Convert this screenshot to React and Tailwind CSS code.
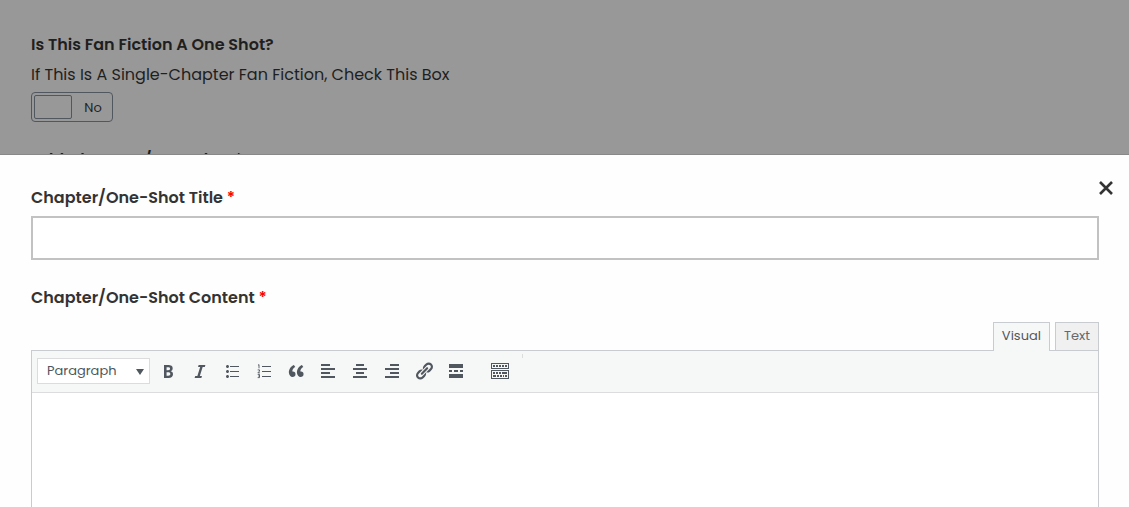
import React, { useState } from "react";

const icons = {
  bold: <path d="M6 4v13h4.54c1.37 0 2.46-.33 3.26-1 .8-.66 1.2-1.58 1.2-2.77 0-.84-.17-1.51-.51-2.01s-.9-.85-1.67-1.03v-.09c.57-.1 1.02-.4 1.36-.9s.51-1.13.51-1.91c0-1.14-.39-1.98-1.17-2.5C12.75 4.26 11.5 4 9.78 4H6zm2.57 5.15V6.26h1.36c.73 0 1.27.11 1.61.32.34.22.51.58.51 1.07 0 .54-.16.92-.47 1.15s-.82.35-1.51.35h-1.5zm0 2.19h1.6c1.44 0 2.16.53 2.16 1.61 0 .6-.17 1.05-.51 1.34s-.86.43-1.57.43H8.57v-3.38z" />,
  italic: <path d="M14.78 6h-2.13l-2.8 9h2.12l-.62 2H4.6l.62-2h2.14l2.8-9H8.03l.62-2h6.75z" />,
  bullist: <path d="M5.5 7C4.67 7 4 6.33 4 5.5 4 4.68 4.67 4 5.5 4 6.32 4 7 4.68 7 5.5 7 6.33 6.32 7 5.5 7zM8 5h9v1H8V5zm-2.5 7c-.83 0-1.5-.67-1.5-1.5C4 9.68 4.67 9 5.5 9c.82 0 1.5.68 1.5 1.5 0 .83-.68 1.5-1.5 1.5zM8 10h9v1H8v-1zm-2.5 7c-.83 0-1.5-.67-1.5-1.5 0-.82.67-1.5 1.5-1.5.82 0 1.5.68 1.5 1.5 0 .83-.68 1.5-1.5 1.5zM8 15h9v1H8v-1z" />,
  numlist: (
    <>
      <path d="M8 5h9v1H8zM8 10h9v1H8zM8 15h9v1H8z" />
      <path d="M4 4.3l1-.7v3.7M3.7 8.9h1.8v1.2l-1.6 1.7h2M3.7 13.4h1.8v3.2H3.7M4.2 15h1.3" fill="none" stroke="currentColor" strokeWidth=".9" />
    </>
  ),
  quote: <path d="M9.49 13.22c0-.74-.2-1.38-.61-1.9-.62-.78-1.83-.88-2.53-.72-.29-1.65 1.11-3.75 2.92-4.65L7.88 4c-2.73 1.3-5.42 4.28-4.96 8.05C3.21 14.43 4.59 16 6.54 16c.85 0 1.56-.25 2.12-.75s.83-1.18.83-2.03zm8.05 0c0-.74-.2-1.38-.61-1.9-.63-.78-1.83-.88-2.53-.72-.29-1.65 1.11-3.75 2.92-4.65L15.93 4c-2.73 1.3-5.41 4.28-4.95 8.05.29 2.38 1.66 3.95 3.61 3.95.85 0 1.56-.25 2.12-.75s.83-1.18.83-2.03z" />,
  alignleft: <path d="M12 5V3H3v2h9zm5 4V7H3v2h14zm-5 4v-2H3v2h9zm5 4v-2H3v2h14z" />,
  aligncenter: <path d="M14 5V3H6v2h8zm3 4V7H3v2h14zm-3 4v-2H6v2h8zm3 4v-2H3v2h14z" />,
  alignright: <path d="M17 5V3H8v2h9zm0 4V7H3v2h14zm0 4v-2H8v2h9zm0 4v-2H3v2h14z" />,
  link: <path d="M17.74 2.76c1.68 1.69 1.68 4.41 0 6.1l-1.53 1.52c-1.12 1.12-2.7 1.47-4.14 1.09l2.62-2.61.76-.77.76-.76c.84-.84.84-2.2 0-3.04-.84-.85-2.2-.85-3.04 0l-.77.76-3.38 3.38c-.37-1.44-.02-3.02 1.1-4.14l1.52-1.53c1.69-1.68 4.42-1.68 6.1 0zM8.59 13.43l5.34-5.34c.42-.42.42-1.1 0-1.52-.44-.43-1.13-.39-1.53 0l-5.33 5.34c-.42.42-.42 1.1 0 1.52.44.43 1.13.39 1.52 0zm-.76 2.29l4.14-4.15c.38 1.44.03 3.02-1.09 4.14l-1.52 1.53c-1.69 1.68-4.41 1.68-6.1 0-1.68-1.68-1.68-4.42 0-6.1l1.53-1.52c1.12-1.12 2.7-1.47 4.14-1.1l-4.14 4.15c-.85.84-.85 2.2 0 3.05.84.84 2.2.84 3.04 0z" />,
  more: <path d="M17 7V3H3v4h14zM6 11V9H3v2h3zm6 0V9H8v2h4zm5 0V9h-3v2h3zm0 6v-4H3v4h14z" />,
  toggle: <path fillRule="evenodd" d="M19 2v6H1V2h18zm-1 5V3H2v4h16zM5 4v2H3V4h2zm3 0v2H6V4h2zm3 0v2H9V4h2zm3 0v2h-2V4h2zm3 0v2h-2V4h2zm2 5v9H1V9h18zm-1 8v-7H2v7h16zM5 11v2H3v-2h2zm3 0v2H6v-2h2zm3 0v2H9v-2h2zm6 0v2h-5v-2h5zm-11 3v2H3v-2h3zm3 0v2H7v-2h2zm3 0v2h-2v-2h2zm2 0v2h-1v-2h1zm3 0v2h-2v-2h2z" />,
};

const tools = [
  { id: "bold", label: "Bold" },
  { id: "italic", label: "Italic" },
  { id: "bullist", label: "Bulleted list" },
  { id: "numlist", label: "Numbered list" },
  { id: "quote", label: "Blockquote" },
  { id: "alignleft", label: "Align left" },
  { id: "aligncenter", label: "Align center" },
  { id: "alignright", label: "Align right" },
  { id: "link", label: "Insert link" },
  { id: "more", label: "Insert Read More tag" },
];

const ToolButton = ({ id, label }) => (
  <button type="button" aria-label={label} className="p-1.5 text-[#50575e] hover:text-black">
    <svg viewBox="0 0 20 20" className="size-5" fill="currentColor">
      {icons[id]}
    </svg>
  </button>
);

const App = () => {
  const [title, setTitle] = useState("");
  const [content, setContent] = useState("");
  const [oneShot, setOneShot] = useState(false);

  return (
    <div className="h-screen flex flex-col overflow-hidden bg-[#fefefe] font-[Poppins,Inter,sans-serif] text-base text-[#333]">
      <div className="h-[155px] shrink-0 overflow-hidden bg-[#989898] border-b border-[#888] px-[31px] pt-[33px] text-[#1f1f1f]">
        <h2 className="font-semibold leading-6">Is This Fan Fiction A One Shot?</h2>
        <p className="mt-1.5 leading-6">If This Is A Single-Chapter Fan Fiction, Check This Box</p>
        <label className="mt-[5px] flex w-[82px] h-[30px] items-center rounded border border-[#50575e] p-0.5 text-[13px]">
          <input
            type="checkbox"
            className="sr-only"
            checked={oneShot}
            onChange={(e) => setOneShot(e.target.checked)}
          />
          <span className="h-6 w-[38px] rounded-xs border border-[#50575e]" />
          <span className="flex-1 pl-1 pt-px text-center">{oneShot ? "Yes" : "No"}</span>
        </label>
        <h2 className="mt-[26px] font-semibold leading-6">Add Chapters/One-Shot *</h2>
      </div>

      <form className="relative flex flex-1 flex-col pl-[31px] pr-[30px] pt-[31px]">
        <button type="button" aria-label="Close" className="absolute right-4 top-[26px]">
          <svg viewBox="0 0 14 14" className="size-3.5" fill="none" stroke="#333" strokeWidth="2.6">
            <path d="M1 1l12 12M13 1L1 13" />
          </svg>
        </button>
        <label htmlFor="title" className="font-semibold leading-6">
          Chapter/One-Shot Title <span className="text-[#f00]">*</span>
        </label>
        <input
          id="title"
          type="text"
          value={title}
          onChange={(e) => setTitle(e.target.value)}
          className="mt-1.5 h-11 w-full border-2 border-[#c2c2c2] bg-white px-3 outline-none"
        />
        <label htmlFor="content" className="mt-[26px] font-semibold leading-6">
          Chapter/One-Shot Content <span className="text-[#f00]">*</span>
        </label>

        <div className="mt-3 flex items-start justify-end gap-[5px] text-[13px] text-[#646970]">
          <button type="button" className="relative z-10 -mb-px h-[29px] border border-b-0 border-[#c8cbcf] bg-[#f6f7f7] px-2 pb-0.5 text-[#50575e]">
            Visual
          </button>
          <button type="button" className="h-7 border border-b-0 border-[#c8cbcf] bg-[#f0f0f1] px-2 pb-px">
            Text
          </button>
        </div>
        <div className="flex flex-1 flex-col border border-b-0 border-[#c8cbcf] bg-white">
          <div className="flex h-[42px] items-center border-b border-[#dcdcde] bg-[#f6f7f7] px-[5px] pb-px">
            <div className="relative mr-0.5">
              <select aria-label="Text format" className="block h-[26px] w-[113px] appearance-none border border-[#dcdcde] bg-white px-[9px] pb-px text-[13px] text-[#50575e]">
                <option>Paragraph</option>
                <option>Heading 1</option>
                <option>Heading 2</option>
              </select>
              <svg viewBox="0 0 8 6" className="pointer-events-none absolute right-1.5 top-[11px] h-1.5 w-2" fill="#50575e">
                <path d="M0 0h8L4 6z" />
              </svg>
            </div>
            {tools.map((tool) => (
              <ToolButton key={tool.id} {...tool} />
            ))}
            <div className="ml-3 flex">
              <ToolButton id="toggle" label="Toolbar Toggle" />
            </div>
            <span className="ml-1.5 mt-[3px] h-1 w-px self-start bg-[#dcdcde]" />
          </div>
          <textarea
            id="content"
            value={content}
            onChange={(e) => setContent(e.target.value)}
            className="w-full flex-1 resize-none p-3 outline-none"
          />
        </div>
      </form>
    </div>
  );
};

export default App;
